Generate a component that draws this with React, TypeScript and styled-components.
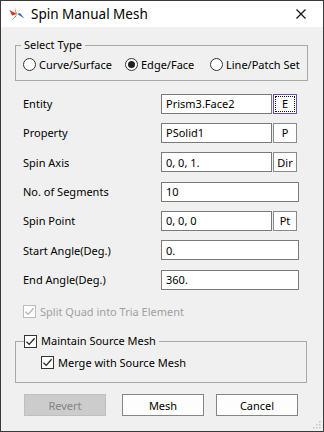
import React, { useState } from "react";
import styled, { createGlobalStyle } from "styled-components";

const GlobalStyle = createGlobalStyle`
    html, body {
        margin: 0;
        padding: 0;
        background: #ffffff;
    }
    * {
        box-sizing: border-box;
    }
`;

const FONT = `"Noto Sans", "Segoe UI", Arial, sans-serif`;

const AppIcon = () => (
    <svg width="16" height="16" viewBox="0 0 16 16">
        <polygon points="8,8 0.5,4 3,9.5" fill="#d8312b" />
        <polygon points="8,8 2,15 7,10.5" fill="#2f9b3a" />
        <polygon points="8,8 15.5,12.5 11,7" fill="#2d6fd0" />
        <polygon points="8,8 13,1 9.5,6.5" fill="#f2b418" />
        <polygon points="8,8 6,1.5 6.5,7" fill="#e0701f" />
    </svg>
);

const CloseIcon = () => (
    <svg width="10" height="10" viewBox="0 0 10 10">
        <path d="M0.5 0.5 L9.5 9.5 M9.5 0.5 L0.5 9.5" stroke="#111" strokeWidth="1.2" />
    </svg>
);

const Check = ({ color }: { color: string }) => (
    <svg width="11" height="11" viewBox="0 0 11 11">
        <path d="M1.5 5.8 L4.2 8.4 L9.6 2.2" stroke={color} strokeWidth="1.3" fill="none" />
    </svg>
);

type ICheckBox = {
    label: string;
    checked: boolean;
    disabled?: boolean;
    onToggle?: Function;
};

const CheckBox = ({ label, checked, disabled, onToggle }: ICheckBox) => (
    <CheckLabel disabled={disabled} onClick={() => !disabled && onToggle && onToggle()}>
        <CheckSquare disabled={disabled}>{checked && <Check color={disabled ? "#b4b4b4" : "#222"} />}</CheckSquare>
        <span>{label}</span>
    </CheckLabel>
);

type IRadio = {
    label: string;
    selected: boolean;
    onSelect: Function;
    width?: string;
};

const Radio = ({ label, selected, onSelect, width }: IRadio) => (
    <RadioLabel width={width} onClick={() => onSelect()}>
        <RadioCircle>{selected && <RadioDot />}</RadioCircle>
        <span>{label}</span>
    </RadioLabel>
);

type IField = {
    label: string;
    value: string;
    action?: string;
    focused?: boolean;
};

const Field = ({ label, value, action, focused }: IField) => (
    <Row>
        <RowLabel>{label}</RowLabel>
        <TextBox short={!!action}>{value}</TextBox>
        {action && <SmallButton focused={focused}>{focused ? <Focus>{action}</Focus> : action}</SmallButton>}
    </Row>
);

const fields: IField[] = [
    { label: "Entity", value: "Prism3.Face2", action: "E", focused: true },
    { label: "Property", value: "PSolid1", action: "P" },
    { label: "Spin Axis", value: "0, 0, 1.", action: "Dir" },
    { label: "No. of Segments", value: "10" },
    { label: "Spin Point", value: "0, 0, 0", action: "Pt" },
    { label: "Start Angle(Deg.)", value: "0." },
    { label: "End Angle(Deg.)", value: "360." },
];

const App = () => {
    const [type, setType] = useState("edge");
    const [maintain, setMaintain] = useState(true);
    const [merge, setMerge] = useState(true);

    return (
        <>
            <GlobalStyle />
            <Window>
                <TitleBar>
                    <AppIcon />
                    <Title>Spin Manual Mesh</Title>
                    <CloseBox>
                        <CloseIcon />
                    </CloseBox>
                </TitleBar>
                <Body>
                    <TypeGroup>
                        <Legend>Select Type</Legend>
                        <RadioRow>
                            <Radio label="Curve/Surface" width="102px" selected={type === "curve"} onSelect={() => setType("curve")} />
                            <Radio label="Edge/Face" width="85px" selected={type === "edge"} onSelect={() => setType("edge")} />
                            <Radio label="Line/Patch Set" selected={type === "line"} onSelect={() => setType("line")} />
                        </RadioRow>
                    </TypeGroup>
                    <Fields>
                        {fields.map((f) => (
                            <Field key={f.label} {...f} />
                        ))}
                    </Fields>
                    <SplitRow>
                        <CheckBox label="Split Quad into Tria Element" checked disabled />
                    </SplitRow>
                    <MaintainGroup>
                        <CheckLegend>
                            <CheckBox label="Maintain Source Mesh" checked={maintain} onToggle={() => setMaintain(!maintain)} />
                        </CheckLegend>
                        <MergeRow>
                            <CheckBox label="Merge with Source Mesh" checked={merge} onToggle={() => setMerge(!merge)} />
                        </MergeRow>
                    </MaintainGroup>
                    <ButtonRow>
                        <DialogButton disabled>Revert</DialogButton>
                        <DialogButton>Mesh</DialogButton>
                        <DialogButton>Cancel</DialogButton>
                    </ButtonRow>
                </Body>
                <Grip>
                    <svg width="10" height="10" viewBox="0 0 10 10">
                        {[
                            [8, 2],
                            [8, 5],
                            [5, 5],
                            [8, 8],
                            [5, 8],
                            [2, 8],
                        ].map(([x, y]) => (
                            <rect key={`${x}-${y}`} x={x} y={y} width="1.5" height="1.5" fill="#c4c4c4" />
                        ))}
                    </svg>
                </Grip>
            </Window>
        </>
    );
};

const Window = styled.div`
    position: relative;
    width: 324px;
    height: 432px;
    display: flex;
    flex-direction: column;
    border: 1px solid #3a3a3a;
    background: #f0f0f0;
    font-family: ${FONT};
    font-size: 11px;
    color: #000;
`;

const TitleBar = styled.div`
    height: 26px;
    flex: none;
    display: flex;
    align-items: center;
    padding-left: 8px;
    background: #ffffff;
`;

const Title = styled.div`
    margin-left: 6px;
    font-size: 13.5px;
    color: #000;
`;

const CloseBox = styled.div`
    margin-left: auto;
    width: 40px;
    height: 26px;
    display: flex;
    align-items: center;
    justify-content: center;
    margin-right: 2px;
`;

const Body = styled.div`
    flex: 1;
    display: flex;
    flex-direction: column;
    padding: 10px 16px 0 14px;
`;

const TypeGroup = styled.fieldset`
    margin: 0;
    height: 44px;
    padding: 0 7px;
    border: 1px solid #a8a8a8;
    border-radius: 0;
`;

const Legend = styled.legend`
    padding: 0 3px;
    margin-left: -2px;
    line-height: 16px;
`;

const RadioRow = styled.div`
    display: flex;
    align-items: center;
    height: 26px;
    margin-top: -2px;
    white-space: nowrap;
`;

const RadioLabel = styled.label<{ width?: string }>`
    display: flex;
    align-items: center;
    flex: none;
    gap: 3px;
    width: ${({ width }) => width || "auto"};
    cursor: pointer;
`;

const RadioCircle = styled.span`
    width: 13px;
    height: 13px;
    border-radius: 50%;
    border: 1px solid #333;
    background: #fff;
    display: flex;
    align-items: center;
    justify-content: center;
`;

const RadioDot = styled.span`
    width: 7px;
    height: 7px;
    border-radius: 50%;
    background: #222;
`;

const Fields = styled.div`
    display: flex;
    flex-direction: column;
    margin-top: 8px;
    padding-left: 8px;
`;

const Row = styled.div`
    height: 29.33px;
    display: flex;
    align-items: center;
`;

const RowLabel = styled.div`
    width: 138px;
`;

const TextBox = styled.div<{ short: boolean }>`
    width: ${({ short }) => (short ? "111px" : "138px")};
    height: 20px;
    padding: 0 4px;
    display: flex;
    align-items: center;
    background: #fff;
    border: 1px solid #7a7a7a;
`;

const SmallButton = styled.div<{ focused?: boolean }>`
    width: 24px;
    height: 20px;
    margin-left: 1px;
    display: flex;
    align-items: center;
    justify-content: center;
    background: #fdfdfd;
    border: 1px solid ${({ focused }) => (focused ? "#6b4fa0" : "#8a8a8a")};
    padding: 1px;
`;

const Focus = styled.span`
    width: 100%;
    height: 100%;
    display: flex;
    align-items: center;
    justify-content: center;
    border: 1px dotted #111;
`;

const CheckLabel = styled.label<{ disabled?: boolean }>`
    display: flex;
    align-items: center;
    gap: 4px;
    white-space: nowrap;
    color: ${({ disabled }) => (disabled ? "#a0a0a0" : "#000")};
    cursor: pointer;
`;

const CheckSquare = styled.span<{ disabled?: boolean }>`
    width: 13px;
    height: 13px;
    display: flex;
    align-items: center;
    justify-content: center;
    background: #fff;
    border: 1px solid ${({ disabled }) => (disabled ? "#bcbcbc" : "#333")};
`;

const SplitRow = styled.div`
    height: 24px;
    display: flex;
    align-items: center;
    padding-left: 8px;
    margin-top: 5px;
`;

const MaintainGroup = styled.fieldset`
    margin: 10px 0 0 0;
    height: 50px;
    padding: 0 8px;
    border: 1px solid #a8a8a8;
`;

const CheckLegend = styled.legend`
    padding: 0 3px 0 0;
    line-height: 16px;
`;

const MergeRow = styled.div`
    display: flex;
    align-items: center;
    height: 18px;
    padding-left: 17px;
    margin-top: 4px;
`;

const ButtonRow = styled.div`
    display: flex;
    gap: 12px;
    padding-left: 9px;
    margin-top: 11px;
    & > :first-child {
        margin-right: 4px;
    }
`;

const DialogButton = styled.button`
    width: 82px;
    height: 22px;
    font-family: ${FONT};
    font-size: 11px;
    color: #000;
    background: #fdfdfd;
    border: 1px solid #858585;
    border-radius: 0;
    padding: 0;
    &:disabled {
        color: #838383;
        background: #cccccc;
        border-color: #bfbfbf;
    }
`;

const Grip = styled.div`
    position: absolute;
    right: 2px;
    bottom: 2px;
    width: 10px;
    height: 10px;
    display: flex;
`;

export default App;
